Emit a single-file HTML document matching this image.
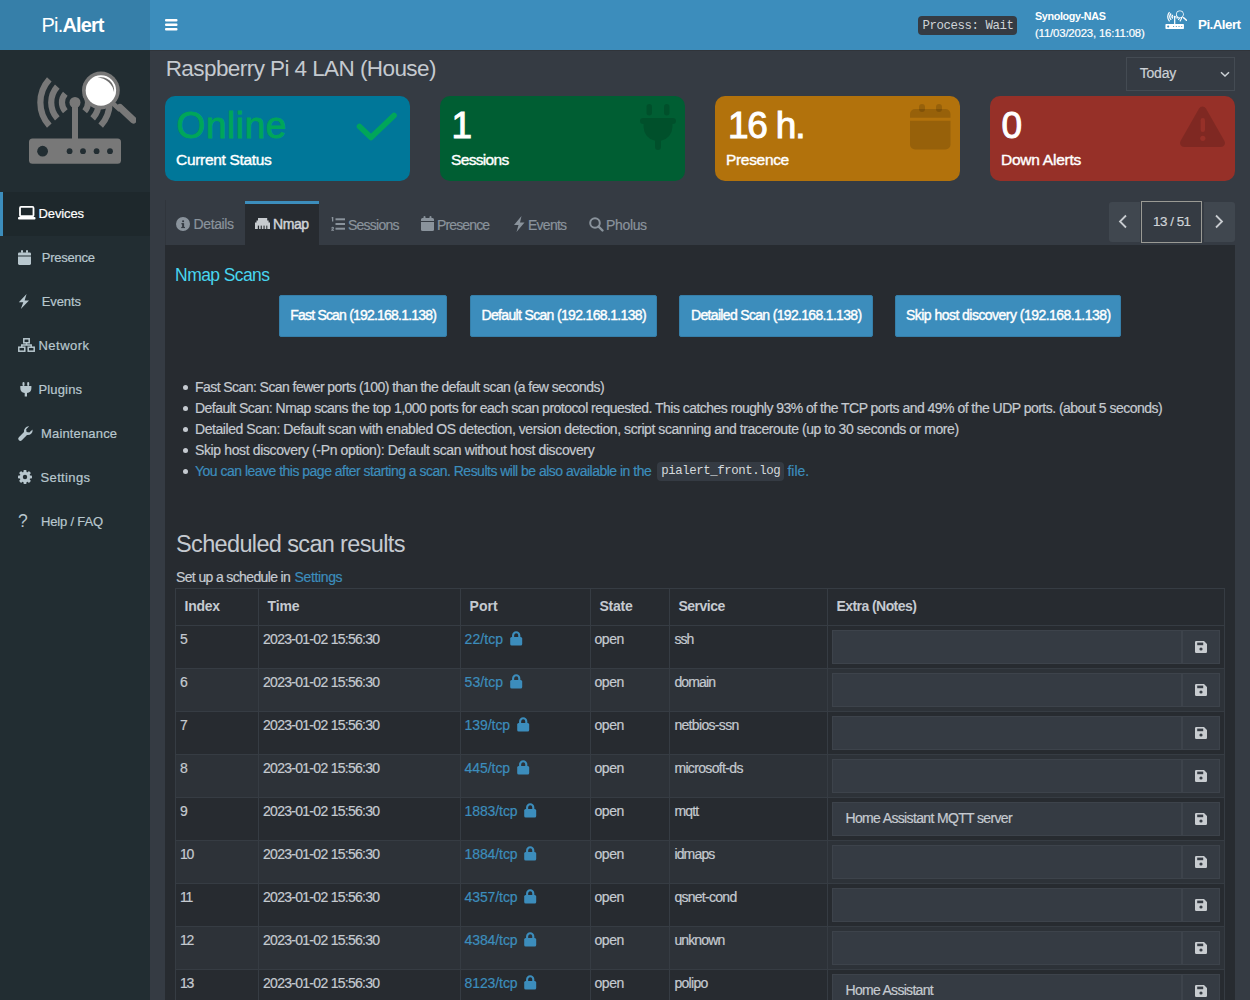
<!DOCTYPE html>
<html><head><meta charset="utf-8">
<style>
*{box-sizing:border-box;margin:0;padding:0}
html,body{width:1250px;height:1000px;overflow:hidden}
body{font-family:"Liberation Sans",sans-serif;background:#353b43;color:#bec5cb;position:relative;font-size:13px}
.a{position:absolute;white-space:nowrap}
svg{position:absolute;overflow:visible}
</style></head>
<body>
<svg width="0" height="0" style="position:absolute">
 <defs>
  <symbol id="plogo" viewBox="27 69 109 97">
   <g fill="none" stroke="currentColor" stroke-width="6.2">
    <path d="M65.3 93.8 A13 13 0 0 0 65.3 111.2"/>
    <path d="M57.3 86.6 A23.8 23.8 0 0 0 57.3 118.4"/>
    <path d="M49.3 79.3 A34.6 34.6 0 0 0 49.3 125.7"/>
    <path d="M84.7 93.8 A13 13 0 0 1 84.7 111.2"/>
    <path d="M92.7 86.6 A23.8 23.8 0 0 1 92.7 118.4"/>
    <path d="M100.7 79.3 A34.6 34.6 0 0 1 100.7 125.7"/>
   </g>
   <rect x="72" y="102" width="6" height="38" fill="currentColor"/>
   <circle cx="75" cy="102.5" r="5.5" fill="currentColor"/>
   <rect x="29" y="138.6" width="92" height="25.2" rx="3.5" fill="currentColor"/>
   <g fill="var(--bg)">
    <circle cx="42.6" cy="151.2" r="5.4"/>
    <circle cx="69.6" cy="151.2" r="2.9"/><circle cx="83" cy="151.2" r="2.9"/><circle cx="96.6" cy="151.2" r="2.9"/><circle cx="110" cy="151.2" r="2.9"/>
   </g>
   <line x1="112" y1="102.5" x2="120" y2="110" stroke="currentColor" stroke-width="4.5"/>
   <line x1="120" y1="107.5" x2="133.3" y2="120" stroke="currentColor" stroke-width="7" stroke-linecap="round"/>
   <circle cx="100.9" cy="90.5" r="18.9" fill="currentColor"/>
   <circle cx="100.9" cy="90.5" r="15.2" fill="var(--hl)"/>
   <path d="M97.46 77.65 A13.3 13.3 0 0 1 114.07 92.35 A17 17 0 0 0 97.46 77.65 Z" fill="var(--arc)"/>
  </symbol>
 </defs>
</svg>
<div class="a" style="left:0px;top:0px;width:1250px;height:50px;background:#3c8dbc;"></div>
<div class="a" style="left:0px;top:0px;width:150px;height:50px;background:#367fa9;"></div>
<div class="a" style="left:41.60px;top:12.57px;font-size:20.00px;line-height:25px;color:#fff;letter-spacing:-0.853px;">Pi.<b>Alert</b></div>
<svg style="left:165px;top:19px" width="13" height="12" viewBox="0 0 13 12"><rect x="0" y="0" width="12.5" height="2.5" rx="1" fill="#fff"/><rect x="0" y="4.5" width="12.5" height="2.5" rx="1" fill="#fff"/><rect x="0" y="9" width="12.5" height="2.5" rx="1" fill="#fff"/></svg>
<div class="a" style="left:918px;top:16px;width:99px;height:19px;background:#353b43;border-radius:4px"></div>
<div class="a" style="left:922.50px;top:17.70px;font-size:12.40px;line-height:16px;color:#d0d4d8;font-family:'Liberation Mono',monospace;letter-spacing:-0.437px;">Process: Wait</div>
<div class="a" style="left:1035.00px;top:9.26px;font-size:10.80px;line-height:14px;color:#fff;font-weight:bold;letter-spacing:-0.377px;">Synology-NAS</div>
<div class="a" style="left:1035.00px;top:26.05px;font-size:11.40px;line-height:14px;color:#fff;letter-spacing:-0.179px;-webkit-text-stroke-width:0.2px;">(11/03/2023, 16:11:08)</div>
<svg style="left:1165px;top:10px;color:#fff;--bg:#3c8dbc;--hl:#3c8dbc;--arc:#3c8dbc" width="22" height="19.5"><use href="#plogo" width="22" height="19.5"/></svg>
<div class="a" style="left:1198.00px;top:15.86px;font-size:13.40px;line-height:17px;color:#fff;font-weight:bold;letter-spacing:-0.549px;">Pi.Alert</div>
<div class="a" style="left:0px;top:50px;width:150px;height:950px;background:#222d32;"></div>
<svg style="left:27px;top:69px;color:#787878;--bg:#222d32;--hl:#fff;--arc:#6e6e6e" width="109" height="97"><use href="#plogo" width="109" height="97"/></svg>
<div class="a" style="left:0px;top:192px;width:150px;height:44px;background:#1e282c;"></div>
<div class="a" style="left:0px;top:192px;width:3px;height:44px;background:#3c8dbc;"></div>
<div class="a" style="left:38.50px;top:205.50px;font-size:13.00px;line-height:16px;color:#fff;letter-spacing:-0.116px;-webkit-text-stroke-width:0.2px;">Devices</div>
<svg style="left:18px;top:206px" width="18" height="14" viewBox="0 0 18 14"><rect x="2" y="0.9" width="13.5" height="9.3" rx="1" fill="none" stroke="#fff" stroke-width="1.8"/><rect x="0" y="11" width="17.5" height="2.4" rx="1" fill="#fff"/></svg>
<div class="a" style="left:41.70px;top:249.50px;font-size:13.00px;line-height:16px;color:#b8c7ce;letter-spacing:-0.226px;-webkit-text-stroke-width:0.2px;">Presence</div>
<svg style="left:18px;top:250px" width="13" height="15" viewBox="0 0 13 15"><g fill="#b8c7ce"><rect x="3" y="0" width="2" height="3" rx="1"/><rect x="8" y="0" width="2" height="3" rx="1"/><path d="M0 3.8 A1.3 1.3 0 0 1 1.3 2.5 H11.7 A1.3 1.3 0 0 1 13 3.8 V5.6 H0 Z"/><path d="M0 6.6 H13 V13.6 A1.3 1.3 0 0 1 11.7 14.9 H1.3 A1.3 1.3 0 0 1 0 13.6 Z"/></g></svg>
<div class="a" style="left:41.70px;top:293.50px;font-size:13.00px;line-height:16px;color:#b8c7ce;letter-spacing:-0.081px;-webkit-text-stroke-width:0.2px;">Events</div>
<svg style="left:18px;top:294px" width="12" height="15" viewBox="0 0 12 15"><path d="M8.6 0 L0.8 8.3 H5.3 L2.8 15 L11 6.6 H6.6 Z" fill="#b8c7ce"/></svg>
<div class="a" style="left:38.50px;top:337.50px;font-size:13.00px;line-height:16px;color:#b8c7ce;letter-spacing:0.477px;-webkit-text-stroke-width:0.2px;">Network</div>
<svg style="left:18px;top:338px" width="17" height="14" viewBox="0 0 17 14"><g fill="none" stroke="#b8c7ce" stroke-width="1.5"><rect x="5.8" y="0.8" width="5.4" height="4"/><rect x="0.8" y="9.2" width="6" height="4"/><rect x="10.2" y="9.2" width="6" height="4"/><path d="M8.5 4.8 V7 M3.8 9.2 V7 H13.2 V9.2"/></g></svg>
<div class="a" style="left:38.50px;top:381.50px;font-size:13.00px;line-height:16px;color:#b8c7ce;letter-spacing:0.150px;-webkit-text-stroke-width:0.2px;">Plugins</div>
<svg style="left:20px;top:382px" width="12" height="15" viewBox="0 0 12 15"><g fill="#b8c7ce"><rect x="2.5" y="0" width="2" height="4" rx="1"/><rect x="7.2" y="0" width="2" height="4" rx="1"/><path d="M0.3 4 H11.4 V6 Q11.4 10.5 7 11 V14.6 H4.7 V11 Q0.3 10.5 0.3 6 Z"/></g></svg>
<div class="a" style="left:41.00px;top:425.50px;font-size:13.00px;line-height:16px;color:#b8c7ce;letter-spacing:0.160px;-webkit-text-stroke-width:0.2px;">Maintenance</div>
<svg style="left:18px;top:426px" width="15" height="15" viewBox="0 0 14 14"><path d="M13.6 3.3 L10.6 6 L8 5.6 L7.6 3 L10.4 0.3 A4.5 4.5 0 0 0 5.6 5.6 L0.8 10.4 A1.9 1.9 0 0 0 3.6 13.2 L8.4 8.4 A4.5 4.5 0 0 0 13.6 3.3 Z" fill="#b8c7ce"/></svg>
<div class="a" style="left:40.50px;top:469.50px;font-size:13.00px;line-height:16px;color:#b8c7ce;letter-spacing:0.367px;-webkit-text-stroke-width:0.2px;">Settings</div>
<svg style="left:18px;top:470px" width="14" height="14" viewBox="0 0 14 14"><g fill="#b8c7ce"><circle cx="7" cy="7" r="5.2"/><rect x="5.5" y="0" width="3" height="14" rx="0.8"/><rect x="0" y="5.5" width="14" height="3" rx="0.8"/><rect x="5.5" y="0" width="3" height="14" rx="0.8" transform="rotate(45 7 7)"/><rect x="5.5" y="0" width="3" height="14" rx="0.8" transform="rotate(-45 7 7)"/></g><circle cx="7" cy="7" r="2.2" fill="#222d32"/></svg>
<div class="a" style="left:41.00px;top:513.50px;font-size:13.00px;line-height:16px;color:#b8c7ce;letter-spacing:-0.171px;-webkit-text-stroke-width:0.2px;">Help / FAQ</div>
<div class="a" style="left:18.00px;top:509.94px;font-size:17.50px;line-height:22px;color:#b8c7ce;">?</div>
<div class="a" style="left:150px;top:50px;width:1100px;height:950px;background:#353b43;"></div>
<div class="a" style="left:150px;top:50px;width:1100px;height:1px;background:#30343a;"></div>
<div class="a" style="left:165.70px;top:55.20px;font-size:22.50px;line-height:28px;color:#c5cad0;letter-spacing:-0.573px;">Raspberry Pi 4 LAN (House)</div>
<div class="a" style="left:1126px;top:57px;width:109px;height:34px;background:#353b43;border:1px solid #444b53"></div>
<div class="a" style="left:1139.70px;top:64.15px;font-size:14.00px;line-height:18px;color:#ccd1d6;letter-spacing:-0.185px;-webkit-text-stroke-width:0.2px;">Today</div>
<svg style="left:1220px;top:71px" width="10" height="7" viewBox="0 0 10 7"><path d="M1 1.2 L5 5 L9 1.2" fill="none" stroke="#ccd1d6" stroke-width="1.5"/></svg>
<div class="a" style="left:165px;top:96px;width:245px;height:85px;background:#007799;border-radius:10px"></div>
<div class="a" style="left:440px;top:96px;width:245px;height:85px;background:#005e33;border-radius:10px"></div>
<div class="a" style="left:715px;top:96px;width:245px;height:85px;background:#b2720c;border-radius:10px"></div>
<div class="a" style="left:990px;top:96px;width:245px;height:85px;background:#963028;border-radius:10px"></div>
<div class="a" style="left:176.60px;top:103.18px;font-size:37.00px;line-height:46px;color:#00a65a;letter-spacing:0.561px;-webkit-text-stroke:0.9px #00a65a;">Online</div>
<div class="a" style="left:176.00px;top:149.63px;font-size:15.50px;line-height:19px;color:#fff;letter-spacing:-0.315px;-webkit-text-stroke-width:0.4px;">Current Status</div>
<div class="a" style="left:451.50px;top:103.18px;font-size:37.00px;line-height:46px;color:#fff;-webkit-text-stroke:1px #fff;">1</div>
<div class="a" style="left:451.00px;top:149.63px;font-size:15.50px;line-height:19px;color:#fff;letter-spacing:-0.665px;-webkit-text-stroke-width:0.4px;">Sessions</div>
<div class="a" style="left:728.00px;top:103.18px;font-size:37.00px;line-height:46px;color:#fff;letter-spacing:-1.208px;-webkit-text-stroke:1px #fff;">16 h.</div>
<div class="a" style="left:726.00px;top:149.63px;font-size:15.50px;line-height:19px;color:#fff;letter-spacing:-0.321px;-webkit-text-stroke-width:0.4px;">Presence</div>
<div class="a" style="left:1001.50px;top:103.18px;font-size:37.00px;line-height:46px;color:#fff;-webkit-text-stroke:1px #fff;">0</div>
<div class="a" style="left:1001.00px;top:149.63px;font-size:15.50px;line-height:19px;color:#fff;letter-spacing:-0.246px;-webkit-text-stroke-width:0.4px;">Down Alerts</div>
<svg style="left:357px;top:115px" width="40" height="25" viewBox="0 0 40 25"><path d="M3 11.5 L14.5 22.5 L37.5 0.5" fill="none" stroke="#00a65a" stroke-width="5.6" stroke-linecap="round" stroke-linejoin="round" transform="translate(-0.5,0)"/></svg>
<svg style="left:640px;top:104px" width="36" height="46" viewBox="0 0 36 46"><g fill="rgba(0,0,0,0.15)"><rect x="6.5" y="0" width="5.5" height="11.5" rx="2.7"/><rect x="24" y="0" width="5.5" height="11.5" rx="2.7"/><path d="M3 14 H33 A3 3 0 0 1 33 20 H32.5 V23 A14.5 14.5 0 0 1 21 36.8 V43 A3 3 0 0 1 15 43 V36.8 A14.5 14.5 0 0 1 3.5 23 V20 H3 A3 3 0 0 1 3 14 Z"/></g></svg>
<svg style="left:910px;top:104px" width="41" height="46" viewBox="0 0 41 46"><g fill="rgba(0,0,0,0.15)"><rect x="9" y="0" width="6" height="8" rx="3"/><rect x="26" y="0" width="6" height="8" rx="3"/><path d="M0 10 A5 5 0 0 1 5 5 H35.5 A5 5 0 0 1 40.5 10 V13.8 H0 Z"/><path d="M0 16.8 H40.5 V40.5 A5 5 0 0 1 35.5 45.5 H5 A5 5 0 0 1 0 40.5 Z"/></g></svg>
<svg style="left:1179px;top:106px" width="47" height="42" viewBox="0 0 47 42"><path d="M20 2.5 A4 4 0 0 1 27 2.5 L45.5 35 A4 4 0 0 1 42 41 H5 A4 4 0 0 1 1.5 35 Z" fill="rgba(0,0,0,0.15)"/><rect x="21.6" y="12" width="4.4" height="14" rx="2.2" fill="#963028"/><circle cx="23.8" cy="32.3" r="2.6" fill="#963028"/></svg>
<div class="a" style="left:165px;top:200px;width:1070px;height:45px;background:#353b43;border-left:1px solid #30353c"></div>
<div class="a" style="left:165px;top:245px;width:1070px;height:755px;background:#272b30;"></div>
<div class="a" style="left:245px;top:201px;width:74px;height:44px;background:#272b30;border-top:3px solid #3c8dbc"></div>
<svg style="left:176px;top:217px" width="14" height="14" viewBox="0 0 14 14"><circle cx="7" cy="7" r="7" fill="#8a939c"/><rect x="6.1" y="6.2" width="2" height="4.6" fill="#353b43"/><rect x="5.3" y="6.2" width="2" height="1.1" fill="#353b43"/><rect x="5.2" y="9.9" width="3.8" height="1.2" fill="#353b43"/><circle cx="7.1" cy="4.2" r="1.05" fill="#353b43"/></svg>
<div class="a" style="left:193.50px;top:215.15px;font-size:14.00px;line-height:18px;color:#8a939c;letter-spacing:-0.362px;-webkit-text-stroke-width:0.2px;">Details</div>
<svg style="left:255px;top:218px" width="15" height="11" viewBox="0 0 15 11"><path d="M0 11 V4.4 H1.5 V2.4 H3 V0 H12.2 V2.4 H13.6 V4.4 H15 V11 Z" fill="#c8ccd0"/><g fill="#272b30"><rect x="2.8" y="7.6" width="1.3" height="3.4"/><rect x="5.7" y="7.6" width="1.1" height="3.4"/><rect x="8.5" y="7.6" width="1.1" height="3.4"/><rect x="11.3" y="7.6" width="1" height="3.4"/></g></svg>
<div class="a" style="left:273.00px;top:215.15px;font-size:14.00px;line-height:18px;color:#d0d4d8;letter-spacing:-0.409px;-webkit-text-stroke-width:0.45px;">Nmap</div>
<svg style="left:331px;top:217px" width="14" height="14" viewBox="0 0 14 14"><g fill="#8a939c"><rect x="4.5" y="1.3" width="9.5" height="2"/><rect x="4.5" y="6" width="9.5" height="2"/><rect x="4.5" y="10.7" width="9.5" height="2"/><path d="M1 0 H2.3 V4.5 H1 V1.2 H0.3 Z"/><path d="M0.2 9 Q0.3 7.2 1.6 7.2 Q3 7.2 3 8.4 Q3 9.3 1.6 10.2 H3 V11.3 H0.2 V10.4 Q1.8 9.2 1.8 8.6 Q1.8 8.2 1.5 8.2 Q1.2 8.2 1.2 9 Z" transform="translate(0,2.5)"/></g></svg>
<div class="a" style="left:348.00px;top:215.65px;font-size:14.00px;line-height:18px;color:#8a939c;letter-spacing:-0.770px;-webkit-text-stroke-width:0.2px;">Sessions</div>
<svg style="left:421px;top:216px" width="13" height="15" viewBox="0 0 13 15"><g fill="#8a939c"><rect x="2.5" y="0" width="2" height="3" rx="1"/><rect x="8.5" y="0" width="2" height="3" rx="1"/><path d="M0 3.5 A1.5 1.5 0 0 1 1.5 2 H11.5 A1.5 1.5 0 0 1 13 3.5 V5 H0 Z"/><path d="M0 6 H13 V13.5 A1.5 1.5 0 0 1 11.5 15 H1.5 A1.5 1.5 0 0 1 0 13.5 Z"/></g></svg>
<div class="a" style="left:437.00px;top:215.65px;font-size:14.00px;line-height:18px;color:#8a939c;letter-spacing:-0.861px;-webkit-text-stroke-width:0.2px;">Presence</div>
<svg style="left:513px;top:216px" width="12" height="16" viewBox="0 0 12 16"><path d="M8.5 0 L1 9 H5.5 L3.5 16 L11.5 6.5 H7 Z" fill="#8a939c"/></svg>
<div class="a" style="left:528.00px;top:215.65px;font-size:14.00px;line-height:18px;color:#8a939c;letter-spacing:-0.736px;-webkit-text-stroke-width:0.2px;">Events</div>
<svg style="left:589px;top:217px" width="15" height="15" viewBox="0 0 15 15"><circle cx="6" cy="6" r="4.8" fill="none" stroke="#8a939c" stroke-width="2"/><path d="M9.5 9.5 L13.5 13.5" stroke="#8a939c" stroke-width="2.4" stroke-linecap="round"/></svg>
<div class="a" style="left:606.00px;top:215.65px;font-size:14.00px;line-height:18px;color:#8a939c;letter-spacing:-0.338px;-webkit-text-stroke-width:0.2px;">Pholus</div>
<div class="a" style="left:1109px;top:202px;width:31px;height:40px;background:#40474f;border-radius:3px 0 0 3px"></div>
<div class="a" style="left:1204px;top:202px;width:31px;height:40px;background:#40474f;border-radius:0 3px 3px 0"></div>
<div class="a" style="left:1141px;top:201px;width:61px;height:42px;background:#353b43;border:1px solid #9a9a94"></div>
<div class="a" style="left:1153.00px;top:212.86px;font-size:13.40px;line-height:17px;color:#d0d4d8;letter-spacing:-0.484px;-webkit-text-stroke-width:0.2px;">13 / 51</div>
<svg style="left:1118px;top:214px" width="10" height="15" viewBox="0 0 10 15"><path d="M8 1.5 L2 7.5 L8 13.5" fill="none" stroke="#c8ccd0" stroke-width="1.8"/></svg>
<svg style="left:1214px;top:214px" width="10" height="15" viewBox="0 0 10 15"><path d="M2 1.5 L8 7.5 L2 13.5" fill="none" stroke="#c8ccd0" stroke-width="1.8"/></svg>
<div class="a" style="left:175.10px;top:263.94px;font-size:17.50px;line-height:22px;color:#48d5ef;letter-spacing:-0.587px;">Nmap Scans</div>
<div class="a" style="left:279px;top:295px;width:168px;height:42px;background:#3c8dbc;border-radius:2px;border:1px solid #367fa9"></div>
<div class="a" style="left:290.25px;top:306.15px;font-size:14.00px;line-height:18px;color:#fff;letter-spacing:-0.798px;-webkit-text-stroke-width:0.4px;">Fast Scan (192.168.1.138)</div>
<div class="a" style="left:470px;top:295px;width:187px;height:42px;background:#3c8dbc;border-radius:2px;border:1px solid #367fa9"></div>
<div class="a" style="left:481.50px;top:306.15px;font-size:14.00px;line-height:18px;color:#fff;letter-spacing:-0.659px;-webkit-text-stroke-width:0.4px;">Default Scan (192.168.1.138)</div>
<div class="a" style="left:679px;top:295px;width:194px;height:42px;background:#3c8dbc;border-radius:2px;border:1px solid #367fa9"></div>
<div class="a" style="left:691.00px;top:306.15px;font-size:14.00px;line-height:18px;color:#fff;letter-spacing:-0.671px;-webkit-text-stroke-width:0.4px;">Detailed Scan (192.168.1.138)</div>
<div class="a" style="left:895px;top:295px;width:226px;height:42px;background:#3c8dbc;border-radius:2px;border:1px solid #367fa9"></div>
<div class="a" style="left:906.00px;top:306.15px;font-size:14.00px;line-height:18px;color:#fff;letter-spacing:-0.536px;-webkit-text-stroke-width:0.4px;">Skip host discovery (192.168.1.138)</div>
<div class="a" style="left:183px;top:385.1px;width:5px;height:5px;background:#c5cad0;border-radius:50%"></div>
<div class="a" style="left:195.00px;top:377.75px;font-size:14.00px;line-height:18px;color:#c5cad0;letter-spacing:-0.563px;-webkit-text-stroke-width:0.2px;">Fast Scan: Scan fewer ports (100) than the default scan (a few seconds)</div>
<div class="a" style="left:183px;top:406.1px;width:5px;height:5px;background:#c5cad0;border-radius:50%"></div>
<div class="a" style="left:195.00px;top:398.75px;font-size:14.00px;line-height:18px;color:#c5cad0;letter-spacing:-0.527px;-webkit-text-stroke-width:0.2px;">Default Scan: Nmap scans the top 1,000 ports for each scan protocol requested. This catches roughly 93% of the TCP ports and 49% of the UDP ports. (about 5 seconds)</div>
<div class="a" style="left:183px;top:427.1px;width:5px;height:5px;background:#c5cad0;border-radius:50%"></div>
<div class="a" style="left:195.00px;top:419.75px;font-size:14.00px;line-height:18px;color:#c5cad0;letter-spacing:-0.438px;-webkit-text-stroke-width:0.2px;">Detailed Scan: Default scan with enabled OS detection, version detection, script scanning and traceroute (up to 30 seconds or more)</div>
<div class="a" style="left:183px;top:448.1px;width:5px;height:5px;background:#c5cad0;border-radius:50%"></div>
<div class="a" style="left:195.00px;top:440.75px;font-size:14.00px;line-height:18px;color:#c5cad0;letter-spacing:-0.371px;-webkit-text-stroke-width:0.2px;">Skip host discovery (-Pn option): Default scan without host discovery</div>
<div class="a" style="left:183px;top:469.1px;width:5px;height:5px;background:#c5cad0;border-radius:50%"></div>
<div class="a" style="left:195.00px;top:461.75px;font-size:14.00px;line-height:18px;color:#3c8dbc;letter-spacing:-0.511px;-webkit-text-stroke-width:0.2px;">You can leave this page after starting a scan. Results will be also available in the </div>
<div class="a" style="left:657px;top:462px;width:127px;height:19px;background:#353b43;border-radius:4px"></div>
<div class="a" style="left:661.30px;top:463.30px;font-size:12.40px;line-height:16px;color:#d6dadd;font-family:'Liberation Mono',monospace;letter-spacing:-0.438px;">pialert_front.log</div>
<div class="a" style="left:787.50px;top:461.75px;font-size:14.00px;line-height:18px;color:#3c8dbc;letter-spacing:-0.042px;-webkit-text-stroke-width:0.2px;">file.</div>
<div class="a" style="left:176.00px;top:529.76px;font-size:23.50px;line-height:29px;color:#c5cad0;letter-spacing:-0.643px;">Scheduled scan results</div>
<div class="a" style="left:176.00px;top:567.55px;font-size:14.00px;line-height:18px;color:#c5cad0;letter-spacing:-0.632px;-webkit-text-stroke-width:0.2px;">Set up a schedule in </div>
<div class="a" style="left:294.50px;top:567.55px;font-size:14.00px;line-height:18px;color:#3c8dbc;letter-spacing:-0.352px;-webkit-text-stroke-width:0.2px;">Settings</div>
<div class="a" style="left:175px;top:588px;width:1050px;height:412px;background:transparent;border:1px solid #363c43;border-bottom:none"></div>
<div class="a" style="left:176px;top:625px;width:1048px;height:43px;background:#272b30;border-top:1px solid #363c43"></div>
<div class="a" style="left:176px;top:668px;width:1048px;height:43px;background:#2d3238;border-top:1px solid #363c43"></div>
<div class="a" style="left:176px;top:711px;width:1048px;height:43px;background:#272b30;border-top:1px solid #363c43"></div>
<div class="a" style="left:176px;top:754px;width:1048px;height:43px;background:#2d3238;border-top:1px solid #363c43"></div>
<div class="a" style="left:176px;top:797px;width:1048px;height:43px;background:#272b30;border-top:1px solid #363c43"></div>
<div class="a" style="left:176px;top:840px;width:1048px;height:43px;background:#2d3238;border-top:1px solid #363c43"></div>
<div class="a" style="left:176px;top:883px;width:1048px;height:43px;background:#272b30;border-top:1px solid #363c43"></div>
<div class="a" style="left:176px;top:926px;width:1048px;height:43px;background:#2d3238;border-top:1px solid #363c43"></div>
<div class="a" style="left:176px;top:969px;width:1048px;height:43px;background:#272b30;border-top:1px solid #363c43"></div>
<div class="a" style="left:258px;top:588px;width:1px;height:412px;background:#363c43;"></div>
<div class="a" style="left:460px;top:588px;width:1px;height:412px;background:#363c43;"></div>
<div class="a" style="left:590px;top:588px;width:1px;height:412px;background:#363c43;"></div>
<div class="a" style="left:669px;top:588px;width:1px;height:412px;background:#363c43;"></div>
<div class="a" style="left:827px;top:588px;width:1px;height:412px;background:#363c43;"></div>
<div class="a" style="left:184.50px;top:597.15px;font-size:14.00px;line-height:18px;color:#c5cad0;font-weight:bold;letter-spacing:-0.237px;">Index</div>
<div class="a" style="left:267.50px;top:597.15px;font-size:14.00px;line-height:18px;color:#c5cad0;font-weight:bold;letter-spacing:-0.101px;">Time</div>
<div class="a" style="left:469.50px;top:597.15px;font-size:14.00px;line-height:18px;color:#c5cad0;font-weight:bold;letter-spacing:0.040px;">Port</div>
<div class="a" style="left:599.50px;top:597.15px;font-size:14.00px;line-height:18px;color:#c5cad0;font-weight:bold;letter-spacing:-0.229px;">State</div>
<div class="a" style="left:678.50px;top:597.15px;font-size:14.00px;line-height:18px;color:#c5cad0;font-weight:bold;letter-spacing:-0.517px;">Service</div>
<div class="a" style="left:836.50px;top:597.15px;font-size:14.00px;line-height:18px;color:#c5cad0;font-weight:bold;letter-spacing:-0.568px;">Extra (Notes)</div>
<div class="a" style="left:180.00px;top:630.15px;font-size:14.00px;line-height:18px;color:#c5cad0;-webkit-text-stroke-width:0.2px;">5</div>
<div class="a" style="left:263.00px;top:630.15px;font-size:14.00px;line-height:18px;color:#c5cad0;letter-spacing:-0.716px;-webkit-text-stroke-width:0.2px;">2023-01-02 15:56:30</div>
<div class="a" style="left:464.50px;top:630.15px;font-size:14.00px;line-height:18px;color:#3c8dbc;letter-spacing:0.096px;-webkit-text-stroke-width:0.2px;">22/tcp</div>
<svg style="left:509.7px;top:631.2px" width="13" height="15" viewBox="0 0 13 15"><path d="M3.1 6.5 V4.4 A3.1 3.1 0 0 1 9.3 4.4 V6.5" fill="none" stroke="#3c8dbc" stroke-width="2.1"/><rect x="0.2" y="6" width="12" height="8.5" rx="1.5" fill="#3c8dbc"/></svg>
<div class="a" style="left:594.60px;top:630.15px;font-size:14.00px;line-height:18px;color:#c5cad0;letter-spacing:-0.509px;-webkit-text-stroke-width:0.2px;">open</div>
<div class="a" style="left:674.40px;top:630.15px;font-size:14.00px;line-height:18px;color:#c5cad0;letter-spacing:-0.982px;-webkit-text-stroke-width:0.2px;">ssh</div>
<div class="a" style="left:832px;top:630px;width:350px;height:34px;background:#353b43;border:1px solid #3d434b"></div>
<div class="a" style="left:1182px;top:630px;width:38px;height:34px;background:#353b43;border:1px solid #3d434b"></div>
<svg style="left:1195px;top:641px" width="12" height="12" viewBox="0 0 12 12"><path d="M0 1.2 A1.2 1.2 0 0 1 1.2 0 H9 L12 3 V10.8 A1.2 1.2 0 0 1 10.8 12 H1.2 A1.2 1.2 0 0 1 0 10.8 Z" fill="#c8ccd0"/><rect x="2.2" y="1.6" width="6" height="2.6" fill="#353b43"/><circle cx="6" cy="8" r="1.6" fill="#353b43"/></svg>
<div class="a" style="left:180.00px;top:673.15px;font-size:14.00px;line-height:18px;color:#c5cad0;-webkit-text-stroke-width:0.2px;">6</div>
<div class="a" style="left:263.00px;top:673.15px;font-size:14.00px;line-height:18px;color:#c5cad0;letter-spacing:-0.716px;-webkit-text-stroke-width:0.2px;">2023-01-02 15:56:30</div>
<div class="a" style="left:464.50px;top:673.15px;font-size:14.00px;line-height:18px;color:#3c8dbc;letter-spacing:0.096px;-webkit-text-stroke-width:0.2px;">53/tcp</div>
<svg style="left:509.7px;top:674.2px" width="13" height="15" viewBox="0 0 13 15"><path d="M3.1 6.5 V4.4 A3.1 3.1 0 0 1 9.3 4.4 V6.5" fill="none" stroke="#3c8dbc" stroke-width="2.1"/><rect x="0.2" y="6" width="12" height="8.5" rx="1.5" fill="#3c8dbc"/></svg>
<div class="a" style="left:594.60px;top:673.15px;font-size:14.00px;line-height:18px;color:#c5cad0;letter-spacing:-0.509px;-webkit-text-stroke-width:0.2px;">open</div>
<div class="a" style="left:674.40px;top:673.15px;font-size:14.00px;line-height:18px;color:#c5cad0;letter-spacing:-0.851px;-webkit-text-stroke-width:0.2px;">domain</div>
<div class="a" style="left:832px;top:673px;width:350px;height:34px;background:#353b43;border:1px solid #3d434b"></div>
<div class="a" style="left:1182px;top:673px;width:38px;height:34px;background:#353b43;border:1px solid #3d434b"></div>
<svg style="left:1195px;top:684px" width="12" height="12" viewBox="0 0 12 12"><path d="M0 1.2 A1.2 1.2 0 0 1 1.2 0 H9 L12 3 V10.8 A1.2 1.2 0 0 1 10.8 12 H1.2 A1.2 1.2 0 0 1 0 10.8 Z" fill="#c8ccd0"/><rect x="2.2" y="1.6" width="6" height="2.6" fill="#353b43"/><circle cx="6" cy="8" r="1.6" fill="#353b43"/></svg>
<div class="a" style="left:180.00px;top:716.15px;font-size:14.00px;line-height:18px;color:#c5cad0;-webkit-text-stroke-width:0.2px;">7</div>
<div class="a" style="left:263.00px;top:716.15px;font-size:14.00px;line-height:18px;color:#c5cad0;letter-spacing:-0.716px;-webkit-text-stroke-width:0.2px;">2023-01-02 15:56:30</div>
<div class="a" style="left:464.50px;top:716.15px;font-size:14.00px;line-height:18px;color:#3c8dbc;letter-spacing:-0.051px;-webkit-text-stroke-width:0.2px;">139/tcp</div>
<svg style="left:516.7px;top:717.2px" width="13" height="15" viewBox="0 0 13 15"><path d="M3.1 6.5 V4.4 A3.1 3.1 0 0 1 9.3 4.4 V6.5" fill="none" stroke="#3c8dbc" stroke-width="2.1"/><rect x="0.2" y="6" width="12" height="8.5" rx="1.5" fill="#3c8dbc"/></svg>
<div class="a" style="left:594.60px;top:716.15px;font-size:14.00px;line-height:18px;color:#c5cad0;letter-spacing:-0.509px;-webkit-text-stroke-width:0.2px;">open</div>
<div class="a" style="left:674.40px;top:716.15px;font-size:14.00px;line-height:18px;color:#c5cad0;letter-spacing:-0.670px;-webkit-text-stroke-width:0.2px;">netbios-ssn</div>
<div class="a" style="left:832px;top:716px;width:350px;height:34px;background:#353b43;border:1px solid #3d434b"></div>
<div class="a" style="left:1182px;top:716px;width:38px;height:34px;background:#353b43;border:1px solid #3d434b"></div>
<svg style="left:1195px;top:727px" width="12" height="12" viewBox="0 0 12 12"><path d="M0 1.2 A1.2 1.2 0 0 1 1.2 0 H9 L12 3 V10.8 A1.2 1.2 0 0 1 10.8 12 H1.2 A1.2 1.2 0 0 1 0 10.8 Z" fill="#c8ccd0"/><rect x="2.2" y="1.6" width="6" height="2.6" fill="#353b43"/><circle cx="6" cy="8" r="1.6" fill="#353b43"/></svg>
<div class="a" style="left:180.00px;top:759.15px;font-size:14.00px;line-height:18px;color:#c5cad0;-webkit-text-stroke-width:0.2px;">8</div>
<div class="a" style="left:263.00px;top:759.15px;font-size:14.00px;line-height:18px;color:#c5cad0;letter-spacing:-0.716px;-webkit-text-stroke-width:0.2px;">2023-01-02 15:56:30</div>
<div class="a" style="left:464.50px;top:759.15px;font-size:14.00px;line-height:18px;color:#3c8dbc;letter-spacing:-0.051px;-webkit-text-stroke-width:0.2px;">445/tcp</div>
<svg style="left:516.7px;top:760.2px" width="13" height="15" viewBox="0 0 13 15"><path d="M3.1 6.5 V4.4 A3.1 3.1 0 0 1 9.3 4.4 V6.5" fill="none" stroke="#3c8dbc" stroke-width="2.1"/><rect x="0.2" y="6" width="12" height="8.5" rx="1.5" fill="#3c8dbc"/></svg>
<div class="a" style="left:594.60px;top:759.15px;font-size:14.00px;line-height:18px;color:#c5cad0;letter-spacing:-0.509px;-webkit-text-stroke-width:0.2px;">open</div>
<div class="a" style="left:674.40px;top:759.15px;font-size:14.00px;line-height:18px;color:#c5cad0;letter-spacing:-0.649px;-webkit-text-stroke-width:0.2px;">microsoft-ds</div>
<div class="a" style="left:832px;top:759px;width:350px;height:34px;background:#353b43;border:1px solid #3d434b"></div>
<div class="a" style="left:1182px;top:759px;width:38px;height:34px;background:#353b43;border:1px solid #3d434b"></div>
<svg style="left:1195px;top:770px" width="12" height="12" viewBox="0 0 12 12"><path d="M0 1.2 A1.2 1.2 0 0 1 1.2 0 H9 L12 3 V10.8 A1.2 1.2 0 0 1 10.8 12 H1.2 A1.2 1.2 0 0 1 0 10.8 Z" fill="#c8ccd0"/><rect x="2.2" y="1.6" width="6" height="2.6" fill="#353b43"/><circle cx="6" cy="8" r="1.6" fill="#353b43"/></svg>
<div class="a" style="left:180.00px;top:802.15px;font-size:14.00px;line-height:18px;color:#c5cad0;-webkit-text-stroke-width:0.2px;">9</div>
<div class="a" style="left:263.00px;top:802.15px;font-size:14.00px;line-height:18px;color:#c5cad0;letter-spacing:-0.716px;-webkit-text-stroke-width:0.2px;">2023-01-02 15:56:30</div>
<div class="a" style="left:464.50px;top:802.15px;font-size:14.00px;line-height:18px;color:#3c8dbc;letter-spacing:-0.084px;-webkit-text-stroke-width:0.2px;">1883/tcp</div>
<svg style="left:524.2px;top:803.2px" width="13" height="15" viewBox="0 0 13 15"><path d="M3.1 6.5 V4.4 A3.1 3.1 0 0 1 9.3 4.4 V6.5" fill="none" stroke="#3c8dbc" stroke-width="2.1"/><rect x="0.2" y="6" width="12" height="8.5" rx="1.5" fill="#3c8dbc"/></svg>
<div class="a" style="left:594.60px;top:802.15px;font-size:14.00px;line-height:18px;color:#c5cad0;letter-spacing:-0.509px;-webkit-text-stroke-width:0.2px;">open</div>
<div class="a" style="left:674.40px;top:802.15px;font-size:14.00px;line-height:18px;color:#c5cad0;letter-spacing:-0.827px;-webkit-text-stroke-width:0.2px;">mqtt</div>
<div class="a" style="left:832px;top:802px;width:350px;height:34px;background:#353b43;border:1px solid #3d434b"></div>
<div class="a" style="left:1182px;top:802px;width:38px;height:34px;background:#353b43;border:1px solid #3d434b"></div>
<div class="a" style="left:845.50px;top:808.85px;font-size:14.00px;line-height:18px;color:#c5cad0;letter-spacing:-0.649px;-webkit-text-stroke-width:0.2px;">Home Assistant MQTT server</div>
<svg style="left:1195px;top:813px" width="12" height="12" viewBox="0 0 12 12"><path d="M0 1.2 A1.2 1.2 0 0 1 1.2 0 H9 L12 3 V10.8 A1.2 1.2 0 0 1 10.8 12 H1.2 A1.2 1.2 0 0 1 0 10.8 Z" fill="#c8ccd0"/><rect x="2.2" y="1.6" width="6" height="2.6" fill="#353b43"/><circle cx="6" cy="8" r="1.6" fill="#353b43"/></svg>
<div class="a" style="left:180.00px;top:845.15px;font-size:14.00px;line-height:18px;color:#c5cad0;letter-spacing:-1.373px;-webkit-text-stroke-width:0.2px;">10</div>
<div class="a" style="left:263.00px;top:845.15px;font-size:14.00px;line-height:18px;color:#c5cad0;letter-spacing:-0.716px;-webkit-text-stroke-width:0.2px;">2023-01-02 15:56:30</div>
<div class="a" style="left:464.50px;top:845.15px;font-size:14.00px;line-height:18px;color:#3c8dbc;letter-spacing:-0.084px;-webkit-text-stroke-width:0.2px;">1884/tcp</div>
<svg style="left:524.2px;top:846.2px" width="13" height="15" viewBox="0 0 13 15"><path d="M3.1 6.5 V4.4 A3.1 3.1 0 0 1 9.3 4.4 V6.5" fill="none" stroke="#3c8dbc" stroke-width="2.1"/><rect x="0.2" y="6" width="12" height="8.5" rx="1.5" fill="#3c8dbc"/></svg>
<div class="a" style="left:594.60px;top:845.15px;font-size:14.00px;line-height:18px;color:#c5cad0;letter-spacing:-0.509px;-webkit-text-stroke-width:0.2px;">open</div>
<div class="a" style="left:674.40px;top:845.15px;font-size:14.00px;line-height:18px;color:#c5cad0;letter-spacing:-0.836px;-webkit-text-stroke-width:0.2px;">idmaps</div>
<div class="a" style="left:832px;top:845px;width:350px;height:34px;background:#353b43;border:1px solid #3d434b"></div>
<div class="a" style="left:1182px;top:845px;width:38px;height:34px;background:#353b43;border:1px solid #3d434b"></div>
<svg style="left:1195px;top:856px" width="12" height="12" viewBox="0 0 12 12"><path d="M0 1.2 A1.2 1.2 0 0 1 1.2 0 H9 L12 3 V10.8 A1.2 1.2 0 0 1 10.8 12 H1.2 A1.2 1.2 0 0 1 0 10.8 Z" fill="#c8ccd0"/><rect x="2.2" y="1.6" width="6" height="2.6" fill="#353b43"/><circle cx="6" cy="8" r="1.6" fill="#353b43"/></svg>
<div class="a" style="left:180.00px;top:888.15px;font-size:14.00px;line-height:18px;color:#c5cad0;letter-spacing:-1.274px;-webkit-text-stroke-width:0.2px;">11</div>
<div class="a" style="left:263.00px;top:888.15px;font-size:14.00px;line-height:18px;color:#c5cad0;letter-spacing:-0.716px;-webkit-text-stroke-width:0.2px;">2023-01-02 15:56:30</div>
<div class="a" style="left:464.50px;top:888.15px;font-size:14.00px;line-height:18px;color:#3c8dbc;letter-spacing:-0.084px;-webkit-text-stroke-width:0.2px;">4357/tcp</div>
<svg style="left:524.2px;top:889.2px" width="13" height="15" viewBox="0 0 13 15"><path d="M3.1 6.5 V4.4 A3.1 3.1 0 0 1 9.3 4.4 V6.5" fill="none" stroke="#3c8dbc" stroke-width="2.1"/><rect x="0.2" y="6" width="12" height="8.5" rx="1.5" fill="#3c8dbc"/></svg>
<div class="a" style="left:594.60px;top:888.15px;font-size:14.00px;line-height:18px;color:#c5cad0;letter-spacing:-0.509px;-webkit-text-stroke-width:0.2px;">open</div>
<div class="a" style="left:674.40px;top:888.15px;font-size:14.00px;line-height:18px;color:#c5cad0;letter-spacing:-0.719px;-webkit-text-stroke-width:0.2px;">qsnet-cond</div>
<div class="a" style="left:832px;top:888px;width:350px;height:34px;background:#353b43;border:1px solid #3d434b"></div>
<div class="a" style="left:1182px;top:888px;width:38px;height:34px;background:#353b43;border:1px solid #3d434b"></div>
<svg style="left:1195px;top:899px" width="12" height="12" viewBox="0 0 12 12"><path d="M0 1.2 A1.2 1.2 0 0 1 1.2 0 H9 L12 3 V10.8 A1.2 1.2 0 0 1 10.8 12 H1.2 A1.2 1.2 0 0 1 0 10.8 Z" fill="#c8ccd0"/><rect x="2.2" y="1.6" width="6" height="2.6" fill="#353b43"/><circle cx="6" cy="8" r="1.6" fill="#353b43"/></svg>
<div class="a" style="left:180.00px;top:931.15px;font-size:14.00px;line-height:18px;color:#c5cad0;letter-spacing:-1.373px;-webkit-text-stroke-width:0.2px;">12</div>
<div class="a" style="left:263.00px;top:931.15px;font-size:14.00px;line-height:18px;color:#c5cad0;letter-spacing:-0.716px;-webkit-text-stroke-width:0.2px;">2023-01-02 15:56:30</div>
<div class="a" style="left:464.50px;top:931.15px;font-size:14.00px;line-height:18px;color:#3c8dbc;letter-spacing:-0.084px;-webkit-text-stroke-width:0.2px;">4384/tcp</div>
<svg style="left:524.2px;top:932.2px" width="13" height="15" viewBox="0 0 13 15"><path d="M3.1 6.5 V4.4 A3.1 3.1 0 0 1 9.3 4.4 V6.5" fill="none" stroke="#3c8dbc" stroke-width="2.1"/><rect x="0.2" y="6" width="12" height="8.5" rx="1.5" fill="#3c8dbc"/></svg>
<div class="a" style="left:594.60px;top:931.15px;font-size:14.00px;line-height:18px;color:#c5cad0;letter-spacing:-0.509px;-webkit-text-stroke-width:0.2px;">open</div>
<div class="a" style="left:674.40px;top:931.15px;font-size:14.00px;line-height:18px;color:#c5cad0;letter-spacing:-0.870px;-webkit-text-stroke-width:0.2px;">unknown</div>
<div class="a" style="left:832px;top:931px;width:350px;height:34px;background:#353b43;border:1px solid #3d434b"></div>
<div class="a" style="left:1182px;top:931px;width:38px;height:34px;background:#353b43;border:1px solid #3d434b"></div>
<svg style="left:1195px;top:942px" width="12" height="12" viewBox="0 0 12 12"><path d="M0 1.2 A1.2 1.2 0 0 1 1.2 0 H9 L12 3 V10.8 A1.2 1.2 0 0 1 10.8 12 H1.2 A1.2 1.2 0 0 1 0 10.8 Z" fill="#c8ccd0"/><rect x="2.2" y="1.6" width="6" height="2.6" fill="#353b43"/><circle cx="6" cy="8" r="1.6" fill="#353b43"/></svg>
<div class="a" style="left:180.00px;top:974.15px;font-size:14.00px;line-height:18px;color:#c5cad0;letter-spacing:-1.373px;-webkit-text-stroke-width:0.2px;">13</div>
<div class="a" style="left:263.00px;top:974.15px;font-size:14.00px;line-height:18px;color:#c5cad0;letter-spacing:-0.716px;-webkit-text-stroke-width:0.2px;">2023-01-02 15:56:30</div>
<div class="a" style="left:464.50px;top:974.15px;font-size:14.00px;line-height:18px;color:#3c8dbc;letter-spacing:-0.084px;-webkit-text-stroke-width:0.2px;">8123/tcp</div>
<svg style="left:524.2px;top:975.2px" width="13" height="15" viewBox="0 0 13 15"><path d="M3.1 6.5 V4.4 A3.1 3.1 0 0 1 9.3 4.4 V6.5" fill="none" stroke="#3c8dbc" stroke-width="2.1"/><rect x="0.2" y="6" width="12" height="8.5" rx="1.5" fill="#3c8dbc"/></svg>
<div class="a" style="left:594.60px;top:974.15px;font-size:14.00px;line-height:18px;color:#c5cad0;letter-spacing:-0.509px;-webkit-text-stroke-width:0.2px;">open</div>
<div class="a" style="left:674.40px;top:974.15px;font-size:14.00px;line-height:18px;color:#c5cad0;letter-spacing:-0.689px;-webkit-text-stroke-width:0.2px;">polipo</div>
<div class="a" style="left:832px;top:974px;width:350px;height:34px;background:#353b43;border:1px solid #3d434b"></div>
<div class="a" style="left:1182px;top:974px;width:38px;height:34px;background:#353b43;border:1px solid #3d434b"></div>
<div class="a" style="left:845.50px;top:980.85px;font-size:14.00px;line-height:18px;color:#c5cad0;letter-spacing:-0.703px;-webkit-text-stroke-width:0.2px;">Home Assistant</div>
<svg style="left:1195px;top:985px" width="12" height="12" viewBox="0 0 12 12"><path d="M0 1.2 A1.2 1.2 0 0 1 1.2 0 H9 L12 3 V10.8 A1.2 1.2 0 0 1 10.8 12 H1.2 A1.2 1.2 0 0 1 0 10.8 Z" fill="#c8ccd0"/><rect x="2.2" y="1.6" width="6" height="2.6" fill="#353b43"/><circle cx="6" cy="8" r="1.6" fill="#353b43"/></svg>
</body></html>
